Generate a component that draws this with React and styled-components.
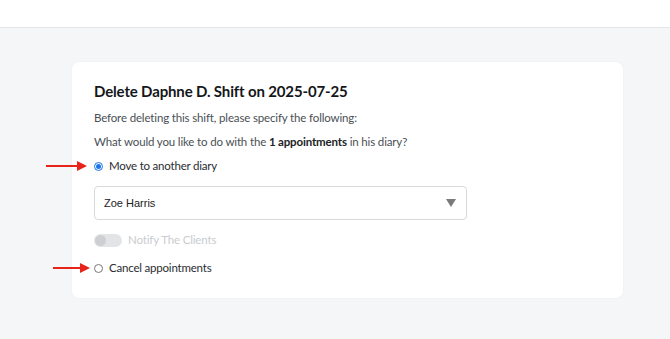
import styled, { createGlobalStyle } from "styled-components"

const Global = createGlobalStyle`
  html, body { margin: 0; padding: 0; }
  body {
    background: #f5f6f8;
    font-family: "Lato", "Noto Sans", sans-serif;
    color: #1f2328;
  }
`

const Page = styled.div`
  width: 670px;
  height: 339px;
  position: relative;
  overflow: hidden;
`

const TopBar = styled.header`
  height: 27px;
  background: #fff;
  border-bottom: 1px solid #e4e6ea;
`

const Main = styled.main`
  padding: 34px 47px 0 72px;
`

const Card = styled.section`
  background: #fff;
  border-radius: 7px;
  box-shadow: 0 0 2px rgba(0,0,0,0.06);
  padding: 19px 22px 20px 22px;
  height: 236px;
  box-sizing: border-box;
`

const Title = styled.h2`
  margin: 0 0 9px;
  font-size: 15px;
  line-height: 20px;
  letter-spacing: -0.15px;
  font-weight: 700;
  color: #15171a;
`

const Text = styled.p`
  margin: 0 0 8px;
  font-size: 11.5px;
  line-height: 16px;
  letter-spacing: -0.15px;
  color: #4a4f55;
  b { font-weight: 700; color: #202326; }
`

const Option = styled.label`
  display: flex;
  align-items: center;
  gap: 6px;
  font-size: 11.5px;
  line-height: 16px;
  letter-spacing: -0.2px;
  color: #2a2d31;
  margin-top: ${p => p.$top || 0}px;
`

const Radio = styled.span`
  width: 7px;
  height: 7px;
  border-radius: 50%;
  border: 1px solid ${p => (p.$checked ? "#1a73e8" : "#777")};
  background: #fff;
  display: inline-flex;
  align-items: center;
  justify-content: center;
  &::after {
    content: "";
    width: 5px;
    height: 5px;
    border-radius: 50%;
    background: ${p => (p.$checked ? "#1a73e8" : "transparent")};
  }
`

const Select = styled.div`
  margin-top: 12px;
  width: 373px;
  height: 34px;
  box-sizing: border-box;
  border: 1px solid #d9d9d9;
  border-radius: 4px;
  display: flex;
  align-items: center;
  justify-content: space-between;
  padding: 0 10px 0 9px;
  font-family: "Liberation Sans", Arial, sans-serif;
  font-size: 11px;
  color: #222;
`

const Caret = styled.span`
  width: 0;
  height: 0;
  border-left: 5px solid transparent;
  border-right: 5px solid transparent;
  border-top: 8px solid #7a7a7a;
`

const ToggleRow = styled.div`
  display: flex;
  align-items: center;
  gap: 6px;
  margin-top: 12px;
  font-size: 11.5px;
  line-height: 16px;
  letter-spacing: -0.15px;
  color: #c9ccd0;
`

const Toggle = styled.span`
  width: 28px;
  height: 13px;
  border-radius: 7px;
  background: #e3e4e6;
  position: relative;
  &::after {
    content: "";
    position: absolute;
    left: 1px;
    top: 1px;
    width: 11px;
    height: 11px;
    border-radius: 50%;
    background: #cdcfd2;
  }
`

const Arrow = styled.svg`
  position: absolute;
  left: ${p => p.$x}px;
  top: ${p => p.$y}px;
`

const RedArrow = ({ x, y, w }) => (
  <Arrow $x={x} $y={y} width={w} height="10" viewBox={`0 0 ${w} 10`}>
    <line x1="0" y1="5" x2={w - 8} y2="5" stroke="#e8231a" strokeWidth="2" />
    <polygon points={`${w - 10},0 ${w},5 ${w - 10},10`} fill="#e8231a" />
  </Arrow>
)

export default function App() {
  return (
    <>
      <Global />
      <Page>
        <TopBar />
        <Main>
          <Card>
            <Title>Delete Daphne D. Shift on 2025-07-25</Title>
            <Text>Before deleting this shift, please specify the following:</Text>
            <Text>What would you like to do with the <b>1 appointments</b> in his diary?</Text>
            <Option $top={8}>
              <Radio $checked />
              Move to another diary
            </Option>
            <Select>
              <span>Zoe Harris</span>
              <Caret />
            </Select>
            <ToggleRow>
              <Toggle />
              Notify The Clients
            </ToggleRow>
            <Option $top={12}>
              <Radio />
              Cancel appointments
            </Option>
          </Card>
        </Main>
        <RedArrow x={46} y={161} w={41} />
        <RedArrow x={53} y={263} w={37} />
      </Page>
    </>
  )
}
